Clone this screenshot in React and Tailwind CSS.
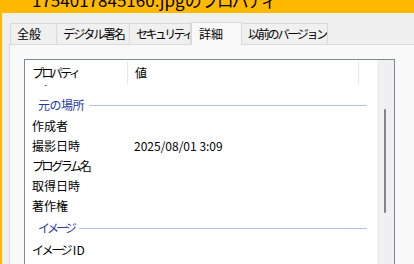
const tabs = [
  { label: "全般", w: "w-[47px]", t: "" },
  { label: "デジタル署名", w: "w-[74px]", t: "tracking-[-1.8px]" },
  { label: "セキュリティ", w: "w-[62px]", t: "tracking-[-2.6px]" },
  { label: "詳細", w: "w-[51px]", t: "", active: true },
  { label: "以前のバージョン", w: "w-[87px]", t: "tracking-[-2.2px]" },
];

function Row({ label, value, t = "" }) {
  return (
    <div className="flex h-[20px] items-center leading-[20px]">
      <div className={`w-[109px] shrink-0 pl-[7px] whitespace-nowrap ${t}`}>{label}</div>
      <div>{value}</div>
    </div>
  );
}

function Group({ label, h, t = "" }) {
  return (
    <div className={`flex ${h} items-center pl-[13px] pr-[10px] text-[#1f3b9f]`}>
      <span className={`leading-[16px] ${t}`}>{label}</span>
      <div className="ml-[5px] h-px flex-1 bg-[#b3c3e8]" />
    </div>
  );
}

export default function App() {
  return (
    <div className="flex h-[264px] w-[414px] flex-col overflow-hidden border-l-2 border-[#ffb900] bg-[#f0f0f0] font-['Noto_Sans_CJK_JP',sans-serif] text-[12px] text-black">
      {/* title bar, only the bottom of the caption shows */}
      <div className="h-[13px] shrink-0 overflow-hidden bg-[#ffb900]">
        <div className="mt-[-9px] whitespace-nowrap pl-[30px] text-[17px] leading-[17px]">
          1754017845160.jpgの<span className="tracking-[-2px]">プロパティ</span>
        </div>
      </div>

      {/* tabs */}
      <div className="mt-[9px] flex h-[22px] shrink-0 items-end pl-[8px]">
        {tabs.map((t) =>
          t.active ? (
            <div
              key={t.label}
              className={`${t.w} relative z-10 -mb-px h-[23px] overflow-hidden border border-b-0 border-[#d9d9d9] bg-[#f9f9f9] pl-[7px] pt-[3px] leading-[16px] whitespace-nowrap`}
            >
              {t.label}
            </div>
          ) : (
            <div
              key={t.label}
              className={`${t.w} ${t.t} -ml-px h-[21px] overflow-hidden border border-b-0 border-[#d9d9d9] bg-[#f0f0f0] pl-[6px] pt-[2px] leading-[16px] whitespace-nowrap first:ml-0`}
            >
              {t.label}
            </div>
          )
        )}
      </div>

      {/* tab panel */}
      <div className="ml-[7px] flex-1 border-l border-t border-[#d9d9d9] bg-[#f9f9f9] pl-[14px] pt-[14px]">
        <div className="flex h-[300px] w-[371px] border border-[#828790] bg-white">
          <div className="flex-1">
            <div className="flex h-[25px] items-center">
              <div className="w-[102px] shrink-0 pl-[7px] tracking-[-2.6px]">プロパティ</div>
              <div className="h-[23px] w-px bg-[#e5e5e5]" />
              <div className="w-[230px] shrink-0 pl-[7px]">値</div>
              <div className="h-[23px] w-px bg-[#e5e5e5]" />
            </div>
            <div className="h-[9px] overflow-hidden">
              <div className="mt-[-11px] pl-[7px] leading-[12px] tracking-[-2px]">ファイル</div>
            </div>
            <Group label="元の場所" h="h-[22px]" t="tracking-[-0.5px]" />
            <Row label="作成者" />
            <Row label="撮影日時" value="2025/08/01 3:09" />
            <Row label="プログラム名" t="tracking-[-2.4px]" />
            <Row label="取得日時" />
            <Row label="著作権" />
            <Group label="イメージ" h="h-[24px]" t="tracking-[-3px]" />
            <Row
              label={
                <>
                  <span className="tracking-[-2.4px]">イメージ</span> ID
                </>
              }
            />
          </div>
          <div className="w-[17px] shrink-0 bg-[#f0f0f0] pl-[7px] pt-[49px]">
            <div className="h-[104px] w-[2px] rounded-full bg-[#858585]" />
          </div>
        </div>
      </div>
    </div>
  );
}
